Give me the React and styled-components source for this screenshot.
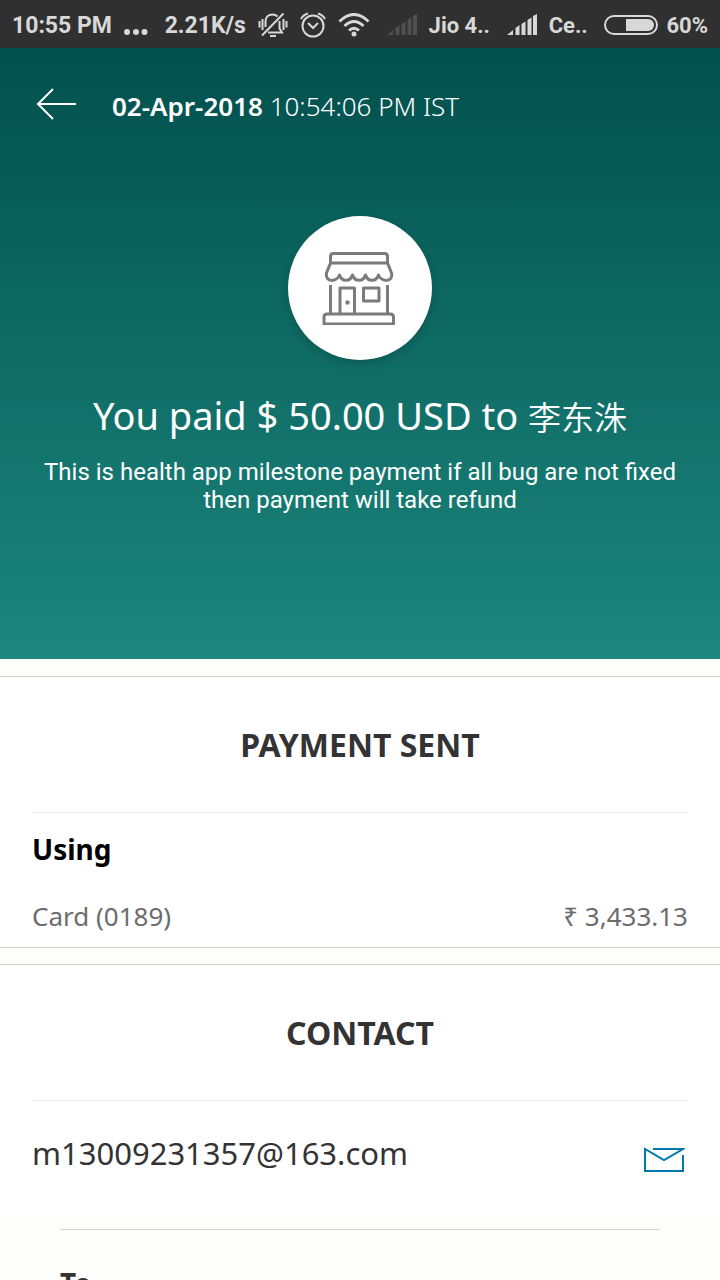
import React from 'react';
import styled, { createGlobalStyle } from 'styled-components';

const GlobalStyle = createGlobalStyle`
  *, *::before, *::after { box-sizing: border-box; }
  body { margin: 0; background: #fefefc; font-family: "Noto Sans", "Noto Sans CJK SC", sans-serif; }
  h1, h2, h3, p { margin: 0; }
  svg { display: block; flex: none; }
`;

const Screen = styled.div`
  display: flex;
  flex-direction: column;
  height: 100vh;
  overflow: hidden;
`;

const StatusBar = styled.header`
  display: flex;
  flex: none;
  align-items: center;
  justify-content: space-between;
  height: 48px;
  padding: 1px 12px 0;
  background: #303030;
  color: #d8d8d8;
  font: 700 23px/28px Roboto, sans-serif;
  white-space: nowrap;
`;

const StatusGroup = styled.div`
  display: flex;
  align-items: center;
  gap: ${(p) => p.$gap}px;
`;

const StatusText = styled.span`
  padding-top: 2px;
  font-size: ${(p) => (p.$small ? 22 : 23)}px;
`;

const Scroll = styled.main`
  flex: 1;
  min-height: 0;
  overflow-y: auto;
  scrollbar-width: none;
`;

const Hero = styled.section`
  display: flex;
  flex-direction: column;
  align-items: center;
  padding-bottom: 145px;
  background: linear-gradient(#02504d, #1c877d);
  color: #fff;
  text-align: center;
`;

const TopBar = styled.div`
  display: flex;
  align-items: center;
  align-self: stretch;
  gap: 36px;
  padding: 34px 36px 0;
`;

const BackButton = styled.button`
  padding: 0;
  border: 0;
  background: none;
  color: inherit;
`;

const DateText = styled.time`
  padding-top: 4px;
  font-size: 26px;
  line-height: 40px;
  font-weight: 300;
  strong { font-weight: 600; }
`;

const Avatar = styled.div`
  display: grid;
  place-items: center;
  width: 144px;
  height: 144px;
  margin-top: 90px;
  border-radius: 50%;
  background: #fff;
  box-shadow: 0 4px 8px rgba(0, 0, 0, 0.16);
`;

const Title = styled.h1`
  margin-top: 29px;
  font-size: 38px;
  line-height: 52px;
  font-weight: 400;
`;

const Payee = styled.span`
  font-family: "Noto Sans CJK SC", sans-serif;
  font-size: 33px;
  line-height: 40px;
  font-weight: 350;
`;

const Note = styled.p`
  margin-top: 17px;
  padding: 0 36px;
  font: 400 24px/28px Roboto, sans-serif;
`;

const Card = styled.section`
  margin-top: ${(p) => p.$gap}px;
  padding: 0 32px;
  border-top: 1px solid #d3d3d3;
  border-bottom: ${(p) => (p.$open ? '0' : '1px solid #d3d3d3')};
  background: #fff;
`;

const CardTitle = styled.h2`
  padding: 48px 0 47px;
  border-bottom: 1px solid #ebebeb;
  color: #333;
  font-size: 32px;
  line-height: 40px;
  font-weight: 700;
  text-align: center;
`;

const Label = styled.h3`
  padding-top: 16px;
  color: #000;
  font-size: 28px;
  line-height: 40px;
  font-weight: 700;
`;

const Row = styled.div`
  display: flex;
  align-items: center;
  justify-content: space-between;
  padding: ${(p) => p.$pad};
  color: ${(p) => p.$color};
  font-size: ${(p) => p.$size}px;
  line-height: 40px;
`;

const MailLink = styled.a`
  padding: 15px 3px 0 0;
  color: #0079ad;
`;

const Details = styled.section`
  margin: 15px 60px 0;
  padding-top: 33px;
  border-top: 1px solid #d3d3d3;
`;

const DetailsTitle = styled.h3`
  color: #333;
  font-size: 28px;
  line-height: 40px;
  font-weight: 700;
`;

const Silent = () => (
  <svg width="30" height="26" viewBox="0 0 30 26" fill="none" stroke="currentColor" strokeWidth="2">
    <path d="M7.500 15V9.500C7.500 5 10.500 2.500 14.500 2.500C16.500 2.500 18 3 19.500 4.500M21.500 9V16.500L24 20.500H10M12 24H18M25.500 1.500L4 23.500" />
    <path d="M4.500 7V18M1.500 9V15.500M25.500 7V18M28.500 9V15.500" />
  </svg>
);

const Alarm = () => (
  <svg width="26" height="26" viewBox="0 0 26 26" fill="none" stroke="currentColor" strokeWidth="2">
    <circle cx="13" cy="14" r="10.500" />
    <path d="M8 11L13 16L18 11M1 7Q3 3 8 1.500M25 7Q23 3 18 1.500" />
  </svg>
);

const Wifi = () => (
  <svg width="32" height="24" viewBox="0 0 32 24" fill="none" stroke="currentColor" strokeWidth="3">
    <path d="M1.500 8.500Q16 -5.500 30.500 8.500M6.500 13Q16 4 25.500 13M11 17.500Q16 13 21 17.500" />
    <circle cx="16" cy="21" r="2.500" fill="currentColor" stroke="none" />
  </svg>
);

const Signal = ({ color }) => (
  <svg width="30" height="21" viewBox="0 0 30 21" fill={color}>
    <path d="M0 21L6 16V21ZM8.500 14L12.500 11V21H8.500ZM14.500 10L18.500 7.500V21H14.500ZM20.500 6L24.500 3.500V21H20.500ZM26 2L30 0V21H26Z" />
  </svg>
);

const Battery = () => (
  <svg width="54" height="20" viewBox="0 0 54 20">
    <rect x="1" y="1" width="52" height="18" rx="9" fill="none" stroke="currentColor" strokeWidth="2" />
    <path d="M22 4H44A6 6 0 0 1 44 16H22Z" fill="currentColor" />
  </svg>
);

const BackArrow = () => (
  <svg width="40" height="32" viewBox="0 0 40 32" fill="none" stroke="currentColor" strokeWidth="2">
    <path d="M40 16H2M17 1L2 16L17 31" />
  </svg>
);

const Shop = () => (
  <svg width="76" height="74" viewBox="-1 0 76 74" fill="none" stroke="#7b7b7b" strokeWidth="3" strokeLinejoin="round">
    <path d="M7.500 12V5.500Q7.500 2.500 10.500 2.500H61.500Q64.500 2.500 64.500 5.500V12ZM7.500 12L3.500 22C2 32 14 31 16.500 24C18.500 31 27.500 31 29.500 24C31.500 31 40.500 31 42.500 24C44.500 31 53.500 31 55.500 24C58 31 70.500 32 68.500 22L64.500 12" />
    <path d="M7.500 34V62M64.500 34V62M17 62V37H31.500V62M40.500 37H56V50H40.500Z" />
    <path d="M1 73V66Q1 63 4 63H67.500Q70.500 63 70.500 66V73Z" />
    <circle cx="24.500" cy="51.500" r="2.200" fill="#7b7b7b" stroke="none" />
  </svg>
);

const Mail = () => (
  <svg width="42" height="26" viewBox="0 0 42 26" fill="none" stroke="currentColor" strokeWidth="2">
    <path d="M10 2H40L21 13L2 2V24H40V8" />
  </svg>
);

export default function App() {
  return (
    <>
      <GlobalStyle />
      <Screen>
        <StatusBar>
          <StatusGroup $gap={12}>
            <StatusText>10:55 PM</StatusText>
            <svg width="24" height="20" viewBox="0 0 24 20" fill="currentColor">
              <circle cx="3" cy="17" r="3" />
              <circle cx="12" cy="17" r="3" />
              <circle cx="20.500" cy="17" r="3" />
            </svg>
          </StatusGroup>
          <StatusGroup $gap={12}>
            <StatusText>2.21K/s</StatusText>
            <Silent />
            <Alarm />
            <Wifi />
          </StatusGroup>
          <StatusGroup $gap={12}>
            <Signal color="#505050" />
            <StatusText $small>Jio 4..</StatusText>
          </StatusGroup>
          <StatusGroup $gap={12}>
            <Signal color="currentColor" />
            <StatusText $small>Ce..</StatusText>
          </StatusGroup>
          <StatusGroup $gap={8}>
            <Battery />
            <StatusText $small>60%</StatusText>
          </StatusGroup>
        </StatusBar>
        <Scroll>
          <Hero>
            <TopBar>
              <BackButton type="button" aria-label="Back">
                <BackArrow />
              </BackButton>
              <DateText dateTime="2018-04-02T22:54:06+05:30">
                <strong>02-Apr-2018</strong> 10:54:06 PM IST
              </DateText>
            </TopBar>
            <Avatar>
              <Shop />
            </Avatar>
            <Title>
              You paid $ 50.00 USD to <Payee lang="zh">李东洙</Payee>
            </Title>
            <Note>This is health app milestone payment if all bug are not fixed then payment will take refund</Note>
          </Hero>
          <Card $gap={17}>
            <CardTitle>PAYMENT SENT</CardTitle>
            <Label>Using</Label>
            <Row $pad="27px 0 11px" $color="#6c6c6c" $size={26}>
              <span>Card (0189)</span>
              <span>₹ 3,433.13</span>
            </Row>
          </Card>
          <Card $gap={16} $open>
            <CardTitle>CONTACT</CardTitle>
            <Row $pad="31px 0 41px" $color="#333" $size={31}>
              <span>m13009231357@163.com</span>
              <MailLink href="mailto:m13009231357@163.com" aria-label="Send email">
                <Mail />
              </MailLink>
            </Row>
          </Card>
          <Details>
            <DetailsTitle>To</DetailsTitle>
          </Details>
        </Scroll>
      </Screen>
    </>
  );
}
